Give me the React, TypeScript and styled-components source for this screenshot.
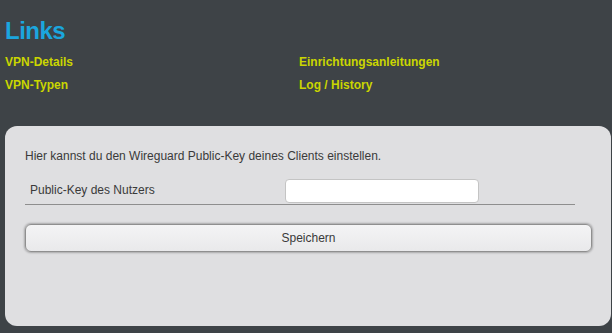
import styled, { createGlobalStyle } from "styled-components";

const GlobalStyle = createGlobalStyle`
  html, body {
    margin: 0;
    padding: 0;
    background: #3e4347;
    font-family: "Liberation Sans", Arial, sans-serif;
  }
`;

const links = [
  { title: "VPN-Details" },
  { title: "Einrichtungsanleitungen" },
  { title: "VPN-Typen" },
  { title: "Log / History" },
];

const App = () => {
  return (
    <Page>
      <GlobalStyle />
      <Title>Links</Title>
      <LinkGrid>
        {links.map((link) => (
          <LinkItem key={link.title} href="#">
            {link.title}
          </LinkItem>
        ))}
      </LinkGrid>
      <Card>
        <Intro>Hier kannst du den Wireguard Public-Key deines Clients einstellen.</Intro>
        <FormRow>
          <Label>Public-Key des Nutzers</Label>
          <KeyInput type="text" />
        </FormRow>
        <SaveButton>Speichern</SaveButton>
      </Card>
    </Page>
  );
};

export default App;

const Page = styled.div`
  padding: 17px 1px 7px 5px;
  min-height: 333px;
  box-sizing: border-box;
`;

const Title = styled.h1`
  margin: 0 0 10px;
  font-size: 24px;
  line-height: 28px;
  font-weight: bold;
  color: #1ba6de;
  letter-spacing: -0.5px;
`;

const LinkGrid = styled.div`
  display: grid;
  grid-template-columns: 294px 1fr;
  row-gap: 9px;
  margin-bottom: 34px;
`;

const LinkItem = styled.a`
  font-size: 12px;
  line-height: 14px;
  font-weight: bold;
  color: #cbd600;
  text-decoration: none;
`;

const Card = styled.div`
  background: #dfdfe1;
  border-radius: 12px;
  height: 200px;
  padding: 23px 19px 0 20px;
  box-sizing: border-box;
`;

const Intro = styled.p`
  margin: 0 0 13px;
  font-size: 12px;
  line-height: 14px;
  color: #3a3a3a;
`;

const FormRow = styled.div`
  display: flex;
  align-items: center;
  width: 550px;
  height: 29px;
  padding: 0 0 0 5px;
  box-sizing: border-box;
  border-bottom: 1px solid #8e8e8e;
  margin-bottom: 19px;
`;

const Label = styled.span`
  width: 255px;
  font-size: 12px;
  color: #3a3a3a;
`;

const KeyInput = styled.input`
  width: 194px;
  height: 24px;
  box-sizing: border-box;
  border: 1px solid #c4c4c4;
  border-radius: 4px;
  background: #fff;
  margin-top: 1px;
  outline: none;
`;

const SaveButton = styled.button`
  display: block;
  width: 567px;
  height: 28px;
  border: 1px solid #8f8f8f;
  border-radius: 6px;
  background: linear-gradient(#f4f4f5, #e9e9eb);
  box-shadow: 0 0 2px 1px rgba(0, 0, 0, 0.25);
  font-family: "Liberation Sans", Arial, sans-serif;
  font-size: 12px;
  color: #3a3a3a;
  cursor: pointer;
`;
